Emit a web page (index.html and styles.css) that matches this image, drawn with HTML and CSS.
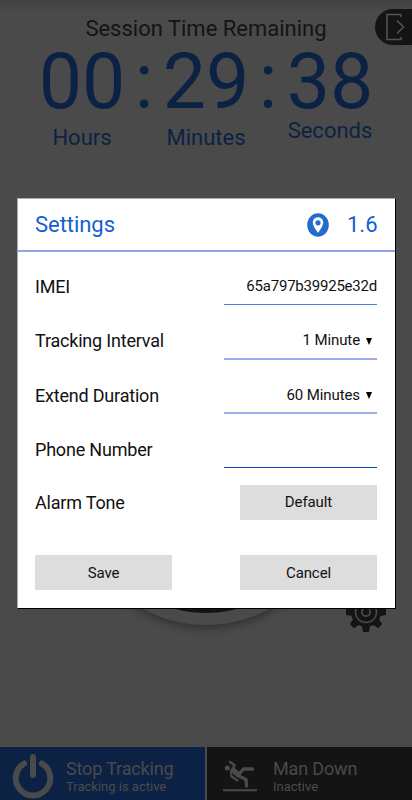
FILE: index.html
```html
<!DOCTYPE html>
<html lang="en">
<head>
<meta charset="utf-8">
<title>Settings</title>
<link rel="stylesheet" href="styles.css">
</head>
<body>
<div class="screen">
  <main class="session">
    <h1 class="session-title">Session Time Remaining</h1>
    <div class="timer">
      <div class="unit"><span class="digits">00</span><span class="label">Hours</span></div>
      <span class="digits colon">:</span>
      <div class="unit"><span class="digits">29</span><span class="label">Minutes</span></div>
      <span class="digits colon">:</span>
      <div class="unit"><span class="digits">38</span><span class="label raised">Seconds</span></div>
    </div>
  </main>
  <div class="exit">
    <svg width="20" height="28" viewBox="0 0 20 28" fill="none" stroke="#555" stroke-width="1.5"><path d="M16 1.500H2V26.500H16V24M16 1.500V4M12 7.500L18.500 14L12 20.500"/></svg>
  </div>
  <div class="dial"></div>
  <svg class="gear" width="42" height="42" viewBox="-21 -21 42 42">
    <g fill="#141414">
      <g id="teeth"><path id="tooth" d="M-4.200-13L-2.900-20H2.900L4.200-13V13L2.900 20H-2.900L-4.200 13Z"/>
      <use href="#tooth" transform="rotate(45)"/></g>
      <use href="#teeth" transform="rotate(90)"/>
      <circle r="15"/>
    </g>
    <circle r="10.500" fill="none" stroke="#4a4a4a" stroke-width="1.500"/>
    <circle r="4.200" fill="none" stroke="#4a4a4a" stroke-width="1.800"/>
  </svg>
  <footer class="actions">
    <div class="action tracking">
      <svg width="42" height="46" viewBox="0 0 42 46" fill="none" stroke="#4a4a4a" stroke-width="6" stroke-linecap="round"><path d="M12.200 10.500A17.200 17.200 0 1 0 29.800 10.500M21 4V22"/></svg>
      <div class="action-text"><strong>Stop Tracking</strong><span>Tracking is active</span></div>
    </div>
    <div class="action mandown">
      <svg width="36" height="34" viewBox="0 0 36 34" fill="none" stroke="#4a4a4a" stroke-linecap="round" stroke-linejoin="round"><circle cx="5.300" cy="9" r="2.600" fill="#4a4a4a" stroke="none"/><path d="M8 3L12.500 6L10.500 10.500" stroke-width="2.500"/><path d="M11.500 11.500L16 15.500" stroke-width="5.500"/><path d="M17.500 14.500L21.500 10H30.500M17 17L24 20.500L24.500 27" stroke-width="3.300"/><path d="M9 12L9.500 17.500L15.500 21.500" stroke-width="2.200"/><path d="M1 31.200H35" stroke-width="2" stroke-linecap="butt"/></svg>
      <div class="action-text"><strong>Man Down</strong><span>Inactive</span></div>
    </div>
  </footer>
  <section class="dialog">
    <header class="dialog-head">
      <h2>Settings</h2>
      <svg width="22" height="24" viewBox="0 0 22 24"><ellipse cx="11" cy="12" rx="10.800" ry="11.700" fill="#246bce"/><path d="M11 4.200C7.900 4.200 5.800 6.500 5.800 9.400C5.800 13.300 11 19.700 11 19.700S16.200 13.300 16.200 9.400C16.200 6.500 14.100 4.200 11 4.200Z" fill="#fff"/><circle cx="11" cy="9.800" r="2.600" fill="#246bce"/></svg>
      <span class="version">1.6</span>
    </header>
    <div class="fields">
      <div class="row"><span>IMEI</span><div class="value imei">65a797b39925e32d</div></div>
      <div class="row"><span>Tracking Interval</span><div class="value soft">1 Minute<i class="caret"></i></div></div>
      <div class="row"><span>Extend Duration</span><div class="value soft">60 Minutes<i class="caret"></i></div></div>
      <div class="row"><span>Phone Number</span><div class="value dark"></div></div>
      <div class="row tone"><span>Alarm Tone</span><button>Default</button></div>
      <div class="buttons"><button>Save</button><button>Cancel</button></div>
    </div>
  </section>
</div>
</body>
</html>
```

FILE: styles.css
```css
* { box-sizing: border-box; }
body { margin: 0; font-family: Roboto, "Liberation Sans", sans-serif; }
h1, h2 { margin: 0; font-weight: 400; }
svg { display: block; flex: none; }
.screen {
  position: relative;
  display: flex;
  flex-direction: column;
  width: 412px;
  height: 800px;
  overflow: hidden;
  background: linear-gradient(#404040, #4a4a4a 12px);
}
.session { flex: 1; padding-top: 15px; }
.session-title {
  color: #141414;
  font-size: 22px;
  line-height: 28px;
  text-align: center;
}
.timer {
  display: flex;
  justify-content: center;
  padding-top: 4px;
  color: #0c2244;
}
.unit { display: flex; flex-direction: column; align-items: center; width: 88px; }
.digits { font-size: 77px; line-height: 70px; }
.colon { width: 36px; text-align: center; }
.label { font-size: 22px; line-height: 26px; margin-top: 8px; }
.raised { margin-top: 1px; }
.exit {
  position: absolute;
  top: 9px;
  right: 0;
  width: 37px;
  height: 36px;
  padding: 4px 0 0 10px;
  border-radius: 18px 0 0 18px;
  background: #141414;
}
.dial {
  position: absolute;
  left: 73px;
  top: 359px;
  width: 266px;
  height: 266px;
  border: 12px solid #4a4a4a;
  border-radius: 50%;
  background: #141414;
  box-shadow: 0 3px 8px #303030;
}
.gear { position: absolute; left: 345px; top: 591px; }
.actions { display: flex; gap: 2px; height: 53px; }
.action { display: flex; align-items: center; color: #4a4a4a; }
.tracking { width: 205px; padding: 5px 0 0 12px; gap: 12px; background: #0c2244; }
.mandown { flex: 1; padding: 5px 0 0 15px; gap: 15px; background: #141414; }
.action-text { display: flex; flex-direction: column; }
.action-text strong { font-weight: 400; font-size: 18px; line-height: 20px; letter-spacing: -0.15px; }
.action-text span { font-size: 13px; line-height: 15px; }
.dialog {
  position: absolute;
  left: 17px;
  top: 198px;
  width: 378px;
  height: 410px;
  border-top: 1px solid #aaa;
  border-left: 1px solid #aaa;
  background: #fff;
  box-shadow: 1px 1px 0 #000;
  color: #111;
}
.dialog-head {
  display: flex;
  align-items: center;
  height: 53px;
  padding: 0 17.500px 0 17px;
  border-bottom: 2px solid #91a4e5;
  color: #145fd0;
  font-size: 22px;
}
.dialog-head h2 { flex: 1; font-size: 22px; letter-spacing: -0.05px; }
.version { margin-left: 17.500px; }
.fields { padding: 7px 18px 0 17px; }
.row {
  display: flex;
  justify-content: space-between;
  align-items: center;
  height: 54.5px;
  font-size: 18px;
  letter-spacing: -0.2px;
}
.value {
  display: flex;
  align-items: center;
  justify-content: flex-end;
  width: 153px;
  height: 37px;
  border-bottom: 1px solid #4d7fe4;
  font-size: 15px;
  letter-spacing: -0.1px;
}
.imei { letter-spacing: -0.22px; }
.soft { height: 38px; padding: 1px 5px 0 0; border-bottom: 2px solid #9caeea; }
.dark { border-color: #0745bc; }
.caret {
  margin: 2px 0 0 6px;
  border-left: 3px solid transparent;
  border-right: 3px solid transparent;
  border-top: 7px solid #000;
}
.tone { height: 50px; }
button {
  width: 137px;
  height: 35px;
  padding: 0;
  border: 0;
  background: #ddd;
  color: #111;
  font: 15px Roboto, "Liberation Sans", sans-serif;
  letter-spacing: -0.1px;
}
.buttons { display: flex; justify-content: space-between; margin-top: 28px; }
```
